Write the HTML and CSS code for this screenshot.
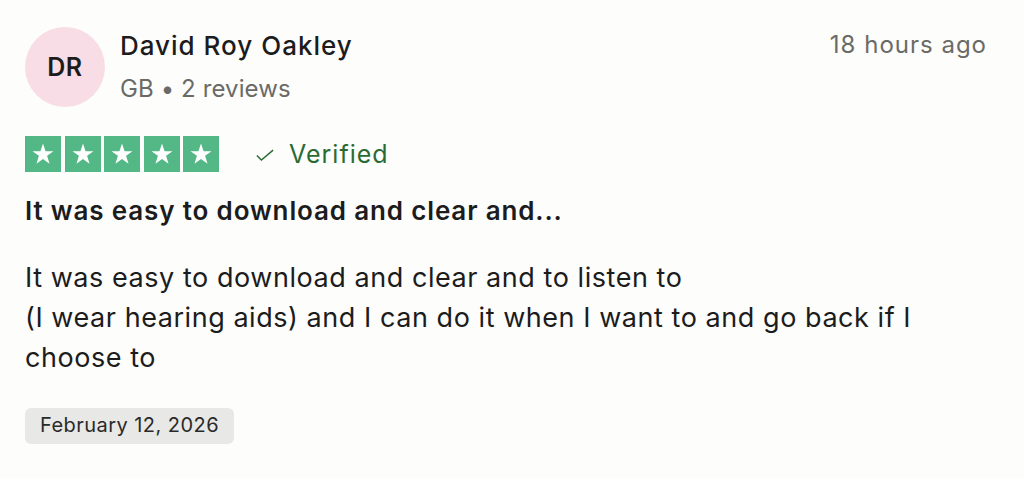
FILE: index.html
```html
<!DOCTYPE html>
<html lang="en">
<head>
    <meta charset="UTF-8">
    <meta name="viewport" content="width=device-width, initial-scale=1.0">
    <title>Review</title>
    <link rel="stylesheet" href="styles.css">
</head>
<body>
    <div class="review">
        <div class="review-head">
            <div class="avatar">DR</div>
            <div class="who">
                <div class="name">David Roy Oakley</div>
                <div class="meta">GB &bull; 2 reviews</div>
            </div>
            <div class="time">18 hours ago</div>
        </div>

        <div class="rating">
            <div class="stars">
                <span class="star"><svg viewBox="0 0 24 24"><polygon points="12,3 14.2,9.6 21,9.6 15.5,13.6 17.6,20.3 12,16.2 6.4,20.3 8.5,13.6 3,9.6 9.8,9.6" /></svg></span>
                <span class="star"><svg viewBox="0 0 24 24"><polygon points="12,3 14.2,9.6 21,9.6 15.5,13.6 17.6,20.3 12,16.2 6.4,20.3 8.5,13.6 3,9.6 9.8,9.6" /></svg></span>
                <span class="star"><svg viewBox="0 0 24 24"><polygon points="12,3 14.2,9.6 21,9.6 15.5,13.6 17.6,20.3 12,16.2 6.4,20.3 8.5,13.6 3,9.6 9.8,9.6" /></svg></span>
                <span class="star"><svg viewBox="0 0 24 24"><polygon points="12,3 14.2,9.6 21,9.6 15.5,13.6 17.6,20.3 12,16.2 6.4,20.3 8.5,13.6 3,9.6 9.8,9.6" /></svg></span>
                <span class="star"><svg viewBox="0 0 24 24"><polygon points="12,3 14.2,9.6 21,9.6 15.5,13.6 17.6,20.3 12,16.2 6.4,20.3 8.5,13.6 3,9.6 9.8,9.6" /></svg></span>
            </div>
            <div class="verified">
                <svg viewBox="0 0 20 14"><polyline points="1,7 6,12 19,1" /></svg>
                Verified
            </div>
        </div>

        <h2 class="title">It was easy to download and clear and...</h2>
        <p class="text">It was easy to download and clear and to listen to<br>(I wear hearing aids) and I can do it when I want to and go back if I choose to</p>

        <div class="date">February 12, 2026</div>
    </div>
</body>
</html>
```

FILE: styles.css
```css
body {
	margin: 0;
	background-color: #fdfdfc;
	font-family: Inter, "Liberation Sans", sans-serif;
	color: #222;
}

.review {
	padding: 27px 37px 0 25px;
	width: 962px;
}

.review-head {
	display: flex;
	align-items: flex-start;
}

.avatar {
	width: 80px;
	height: 80px;
	border-radius: 50%;
	background-color: #f8dce6;
	display: flex;
	align-items: center;
	justify-content: center;
	font-size: 25px;
	font-weight: 600;
	letter-spacing: 0.5px;
	color: #1c1c1c;
	flex-shrink: 0;
}

.who {
	margin-left: 15px;
	flex: 1;
	padding-top: 3px;
}

.name {
	font-size: 26px;
	font-weight: 500;
	letter-spacing: 1px;
	color: #1c1c1c;
	line-height: 32px;
}

.meta {
	font-size: 24px;
	letter-spacing: 0.1px;
	color: #6a6a66;
	line-height: 32px;
	margin-top: 11px;
}

.time {
	font-size: 24px;
	letter-spacing: 1px;
	color: #6a6a66;
	line-height: 32px;
	padding-top: 2px;
}

.rating {
	display: flex;
	align-items: center;
	margin-top: 29px;
}

.stars {
	display: flex;
	gap: 3.5px;
}

.star {
	width: 36px;
	height: 36px;
	background-color: #53b886;
	display: flex;
	align-items: center;
	justify-content: center;
}

.star svg {
	width: 28px;
	height: 28px;
	fill: white;
}

.verified {
	margin-left: 37px;
	display: flex;
	align-items: center;
	font-size: 25px;
	letter-spacing: 1px;
	color: #2b6b33;
}

.verified svg {
	width: 18px;
	height: 13px;
	fill: none;
	stroke: #2b6b33;
	stroke-width: 1.6;
	margin-right: 15px;
	margin-top: 3px;
}

.title {
	margin: 23px 0 0 0;
	font-size: 26px;
	font-weight: 600;
	letter-spacing: 0.85px;
	line-height: 32px;
	color: #1c1c1c;
}

.text {
	margin: 31px 0 0 0;
	font-size: 27px;
	letter-spacing: 0.55px;
	line-height: 40px;
	color: #1c1c1c;
	width: 900px;
}

.date {
	display: inline-block;
	margin-top: 30px;
	background-color: #e8e8e6;
	border-radius: 6px;
	padding: 5px 15px 6px 15px;
	font-size: 20px;
	letter-spacing: 0.45px;
	line-height: 25px;
	color: #2a2a2a;
}
```
